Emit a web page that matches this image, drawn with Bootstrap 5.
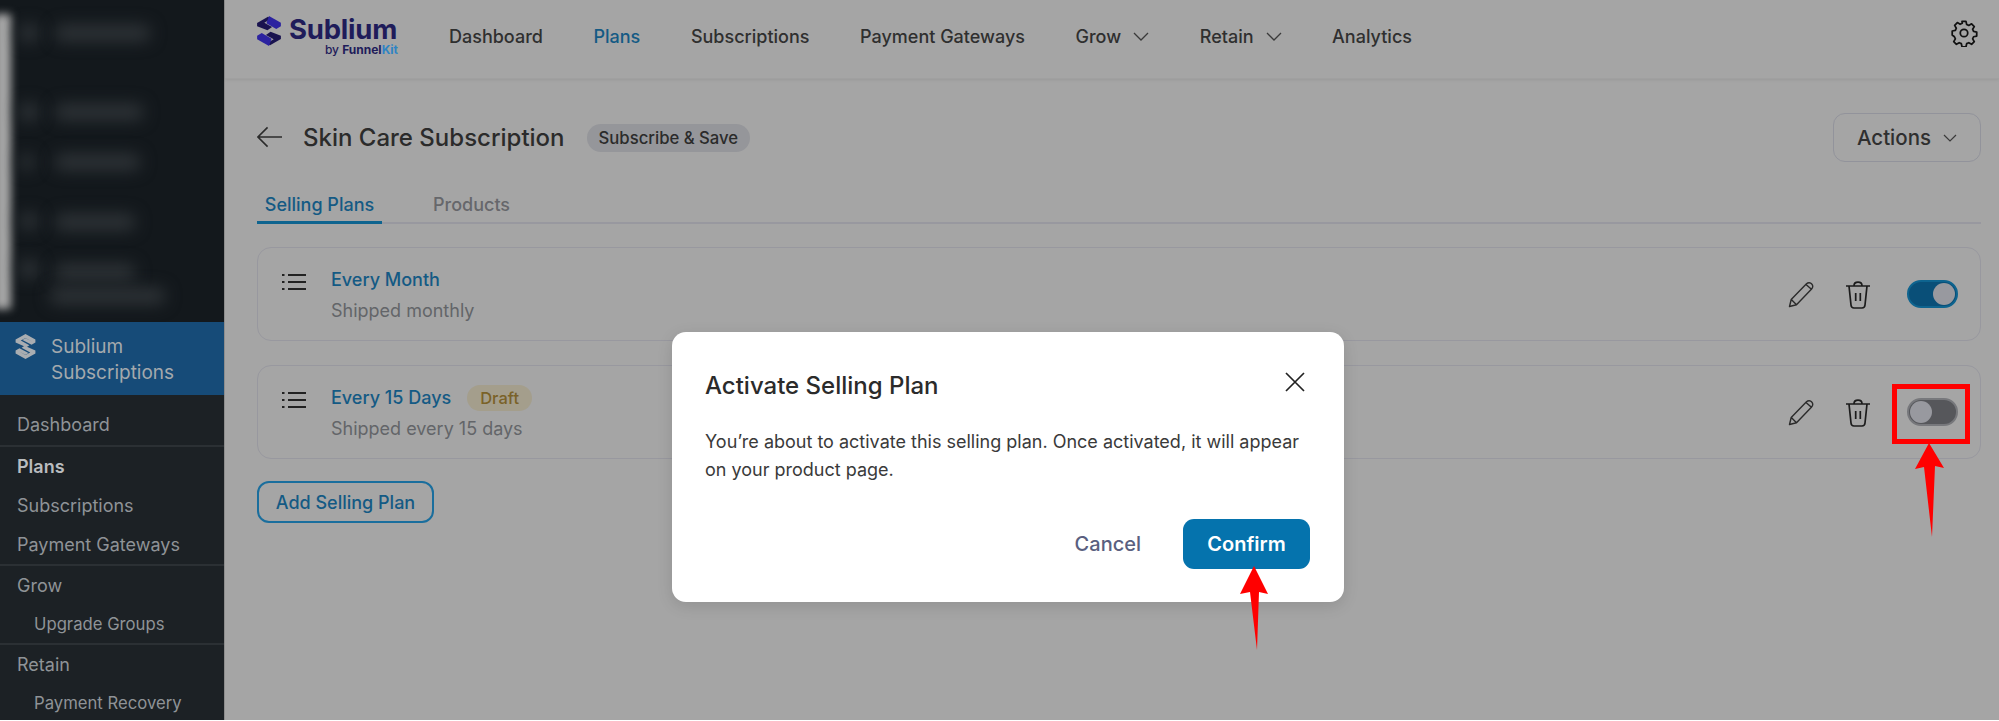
<!DOCTYPE html>
<html lang="en">
<head>
<meta charset="utf-8">
<title>Sublium Plans</title>
<link href="https://cdn.jsdelivr.net/npm/bootstrap@5.3.0/dist/css/bootstrap.min.css" rel="stylesheet">
<style>
html,body{height:720px;overflow:hidden;background:#fff}
body{font-family:Inter,"Liberation Sans",sans-serif;color:#2b2b2b}
.shell{height:720px;width:1999px}
.side{width:224px;flex:none;background:#1c2125;color:#8f9397;font-size:18px}
.side-top{height:322px;background:#13181c;position:relative;overflow:hidden}
.blur-strip{position:absolute;left:-6px;top:14px;width:17px;height:295px;background:#a8a8a8;filter:blur(4px)}
.blur-bar{position:absolute;background:#2f3438;border-radius:6px;filter:blur(8px)}
.side-head{height:73px;background:#164b78;color:#a4a9ad;font-size:19px;line-height:26px;padding:12px 0 0 15px;gap:15px}
.side-item{padding-left:17px;line-height:39px;height:39px;white-space:nowrap}
.side-first{padding-top:10px;height:50px}
.side-sub{padding-left:34px;font-size:16.7px;line-height:38px;height:38px}
.side-group{border-bottom:2px solid #2b3034}
.side-active{color:#b9bcbf;font-weight:600}
.main-area{background:#a5a5a5;min-width:0;position:relative;border-left:1px solid #8d8d8d}
.topbar{height:79px;padding:0 21px 5px 32px;box-shadow:0 1px 3px rgba(0,0,0,.08);border-bottom:1px solid #a0a0a0;font-size:18px;font-weight:500}
.brand-box{width:192px;flex:none;margin-top:-1px}
.brand-name{font-size:27.5px;font-weight:700;color:#1f1c5a;line-height:27px;letter-spacing:-.2px}
.brand-by{font-size:12px;font-weight:500;color:#1f1c5a;line-height:14px;text-align:right;width:109px}
.brand-by b{font-weight:700}
.brand-kit{color:#2f84c4}
.top-link{color:#2f2f2f;text-decoration:none;white-space:nowrap;font-size:18px;margin-right:50.6px}
.top-active{color:#145a84}
.content-pad{padding:33px 18px 0 32px}
.title-row{height:50px;margin-bottom:19px}
.page-title{font-size:24px;font-weight:500;margin:2px 22px 0 21px;color:#2b2b2b;line-height:32px}
.type-pill{background:#95969a;color:#2b2b2b;font-size:16.7px;font-weight:500;border-radius:14px;padding:0 12px;height:28px;line-height:28px;margin-top:2px}
.actions-btn{width:148px;height:49px;border:1.5px solid #92939b;border-radius:12px;font-size:20.5px;font-weight:500;color:#2f2f2f;background:transparent;padding:2px 0 0}
.tabs-row{border-bottom:2px solid #98989f;height:43px;margin-bottom:23px}
.tab-on{width:125px;text-align:center;color:#145a84;font-weight:500;font-size:18px;border-bottom:3px solid #0e648f;height:43px;line-height:28px;padding-top:10px}
.tab-off{margin-left:51px;color:#66676b;font-weight:500;font-size:18px;line-height:28px;padding-top:10px}
.plan-box{height:94px;border:1.5px solid #98989f;border-radius:14px;padding:0 22px 0 24px;margin-bottom:24px;background:transparent}
.plan-name{color:#145a84;font-weight:500;font-size:18px;line-height:24px}
.plan-sub{color:#636569;font-size:18px;line-height:24px;margin-top:7px}
.plan-text{margin-left:25px;padding-top:20px}
.list-ico{margin-top:25px;flex:none}
.draft-pill{background:#a49e8c;color:#7a6228;font-size:16.5px;font-weight:500;border-radius:14px;padding:0 13px;height:26px;line-height:26px;margin:-1px 0 -1px 16px}
.toggle-track{width:51px;height:28px;border-radius:14px;position:relative;margin-left:37px}
.toggle-on{background:#094f78;border:2px solid #0e648f}
.toggle-off{background:#56575b;border:2px solid #77787c}
.toggle-knob{position:absolute;top:1px;width:22px;height:22px;border-radius:50%;background:#98999f}
.toggle-on .toggle-knob{right:1px}
.toggle-off .toggle-knob{left:1px}
.trash-ico{margin-left:31px}
.add-btn{width:177px;height:42px;border:2px solid #1a6e9d;border-radius:12px;color:#145a84;font-size:18px;font-weight:500;background:transparent;padding:0;margin-top:-2px}
.dialog-box{position:absolute;left:672px;top:332px;width:672px;height:270px;background:#fff;border-radius:14px;box-shadow:0 4px 16px rgba(0,0,0,.12);border:0;padding:0 34px 0 33px}
.dialog-title{font-size:24px;font-weight:500;color:#2b2b2b;line-height:30px;margin:39px 0 0}
.dialog-text{font-size:18px;line-height:28px;color:#3a3a3a;margin:27px 0 0}
.dialog-close{position:absolute;left:613px;top:40px;background:none;border:0;padding:0;line-height:0}
.dialog-foot{margin-top:35px}
.cancel-link{color:#5a5f80;font-size:20px;font-weight:500;background:none;border:0;padding:0;margin-right:42px}
.confirm-btn{width:127px;height:50px;background:#0573ad;color:#fff;font-size:20px;font-weight:600;border:0;border-radius:11px;padding:0}
.marker{position:absolute;z-index:5}
.red-box{left:1892px;top:384px;width:78px;height:60px;border:5px solid #f00}
</style>
</head>
<body>
<div class="shell d-flex position-relative">
  <aside class="side">
    <div class="side-top">
      <div class="blur-strip"></div>
      <div class="blur-bar" style="left:20px;top:24px;width:18px;height:18px"></div>
      <div class="blur-bar" style="left:55px;top:25px;width:95px;height:16px"></div>
      <div class="blur-bar" style="left:20px;top:103px;width:18px;height:18px"></div>
      <div class="blur-bar" style="left:55px;top:104px;width:88px;height:16px"></div>
      <div class="blur-bar" style="left:20px;top:154px;width:14px;height:16px"></div>
      <div class="blur-bar" style="left:55px;top:154px;width:85px;height:16px"></div>
      <div class="blur-bar" style="left:20px;top:213px;width:18px;height:16px"></div>
      <div class="blur-bar" style="left:55px;top:214px;width:80px;height:16px"></div>
      <div class="blur-bar" style="left:20px;top:260px;width:18px;height:18px"></div>
      <div class="blur-bar" style="left:55px;top:264px;width:80px;height:16px"></div>
      <div class="blur-bar" style="left:50px;top:288px;width:115px;height:16px"></div>
    </div>
    <div class="side-head d-flex">
      <svg width="21" height="25" viewBox="0 0 23 29" class="flex-shrink-0" fill="#a9adb1"><path d="M11.500 0 23 6.500V10l-4.500 2.500L8 7l3.500-2 7 3.500-7-4L6 7.500l10 5.500-3.500 2.500L0 10V6.500z"/><g transform="rotate(180 11.500 14.500)"><path d="M11.500 0 23 6.500V10l-4.500 2.500L8 7l3.500-2 7 3.500-7-4L6 7.500l10 5.500-3.500 2.500L0 10V6.500z"/></g></svg>
      <div>Sublium<br>Subscriptions</div>
    </div>
    <div class="side-group"><div class="side-item side-first">Dashboard</div></div>
    <div class="side-group">
      <div class="side-item side-active">Plans</div>
      <div class="side-item">Subscriptions</div>
      <div class="side-item">Payment Gateways</div>
    </div>
    <div class="side-group">
      <div class="side-item">Grow</div>
      <div class="side-sub">Upgrade Groups</div>
    </div>
    <div>
      <div class="side-item">Retain</div>
      <div class="side-sub">Payment Recovery</div>
    </div>
  </aside>
  <main class="main-area flex-grow-1">
    <nav class="topbar d-flex align-items-center">
      <div class="brand-box d-flex">
        <svg width="24" height="30" viewBox="0 0 23 29" class="flex-shrink-0 me-2"><path fill="#19134f" d="M0 6.800 10.500.8l3 1.800L7 6.500l7.500 4.200L10 13.800 0 9.800z"/><path fill="#2c23a0" d="M11.500 0 23 6.500V10l-4.500 2.500L9 7z"/><g transform="rotate(180 11.500 14.500)"><path fill="#19134f" d="M0 6.800 10.500.8l3 1.800L7 6.500l7.500 4.200L10 13.800 0 9.800z"/><path fill="#2c23a0" d="M11.500 0 23 6.500V10l-4.500 2.500L9 7z"/></g></svg>
        <div><div class="brand-name">Sublium</div><div class="brand-by">by <b>Funnel</b><b class="brand-kit">Kit</b></div></div>
      </div>
      <a class="top-link" href="#">Dashboard</a>
      <a class="top-link top-active" href="#">Plans</a>
      <a class="top-link" href="#">Subscriptions</a>
      <a class="top-link" href="#">Payment Gateways</a>
      <a class="top-link d-inline-flex align-items-center gap-2" href="#">Grow <svg width="16" height="9" viewBox="0 0 16 9" class="ms-1"><path d="M1 1l7 7 7-7" fill="none" stroke="#3a3a3a" stroke-width="1.300"/></svg></a>
      <a class="top-link d-inline-flex align-items-center gap-2" href="#">Retain <svg width="16" height="9" viewBox="0 0 16 9" class="ms-1"><path d="M1 1l7 7 7-7" fill="none" stroke="#3a3a3a" stroke-width="1.300"/></svg></a>
      <a class="top-link" href="#">Analytics</a>
      <svg width="28" height="28" viewBox="0 0 24 24" class="ms-auto mb-2" fill="none" stroke="#111" stroke-width="1.500" stroke-linejoin="round"><circle cx="12" cy="12" r="3.200"/><path d="M10.300 2h3.400l.6 2.700 1.800.8 2.400-1.400 2.300 2.400-1.400 2.300.8 1.800 2.700.6v3.400l-2.700.6-.8 1.800 1.400 2.400-2.300 2.300-2.400-1.400-1.800.8-.6 2.700h-3.400l-.6-2.700-1.800-.8-2.400 1.400-2.300-2.300 1.400-2.400-.8-1.800L1.900 13.700v-3.400l2.700-.6.8-1.800L4 5.500l2.300-2.400 2.400 1.400 1.800-.8z"/></svg>
    </nav>
    <div class="content-pad">
      <div class="title-row d-flex align-items-center">
        <svg width="25" height="22" viewBox="0 0 26 22" fill="none" stroke="#2b2b2b" stroke-width="1.600"><path d="M26 11H1M11 1 1 11l10 10"/></svg>
        <h1 class="page-title">Skin Care Subscription</h1>
        <span class="type-pill">Subscribe &amp; Save</span>
        <button class="actions-btn ms-auto d-flex align-items-center justify-content-center gap-2" type="button">Actions <svg width="14" height="8" viewBox="0 0 14 8" class="ms-1"><path d="M1 1l6 6 6-6" fill="none" stroke="#3a3a3a" stroke-width="1.200"/></svg></button>
      </div>
      <div class="tabs-row d-flex">
        <div class="tab-on">Selling Plans</div>
        <div class="tab-off">Products</div>
      </div>
      <div class="plan-box d-flex">
        <svg width="24" height="18" viewBox="0 0 24 18" class="list-ico" fill="none" stroke="#222" stroke-width="2"><path d="M6 2h18M6 9h18M6 16h18M0 2h2.500M0 9h2.500M0 16h2.500"/></svg>
        <div class="plan-text flex-grow-1">
          <div class="plan-name">Every Month</div>
          <div class="plan-sub">Shipped monthly</div>
        </div>
        <div class="d-flex align-items-center">
          <svg width="27" height="27" viewBox="0 0 27 27" fill="none" stroke="#2b2b2b" stroke-width="1.400" stroke-linejoin="round"><path d="M1.500 25.500l1.700-7L18.500 2.800c1.500-1.400 4-1.300 5.300.2 1.400 1.500 1.200 3.700-.2 5L8.500 23.800zM3.300 18.500l5.200 5.300M18 3.500l5.700 5"/></svg>
          <svg width="24" height="29" viewBox="0 0 24 29" class="trash-ico" fill="none" stroke="#1c1c1c" stroke-width="1.700"><path d="M0 6h24M8 5.500C8 1 16 1 16 5.500M3 6l2 19c.2 2 1.500 3 3 3h8c1.500 0 2.800-1 3-3l2-19M9.700 13v8M14.300 13v8"/></svg>
          <div class="toggle-track toggle-on"><div class="toggle-knob"></div></div>
        </div>
      </div>
      <div class="plan-box d-flex">
        <svg width="24" height="18" viewBox="0 0 24 18" class="list-ico" fill="none" stroke="#222" stroke-width="2"><path d="M6 2h18M6 9h18M6 16h18M0 2h2.500M0 9h2.500M0 16h2.500"/></svg>
        <div class="plan-text flex-grow-1">
          <div class="d-flex align-items-center"><div class="plan-name">Every 15 Days</div><span class="draft-pill">Draft</span></div>
          <div class="plan-sub">Shipped every 15 days</div>
        </div>
        <div class="d-flex align-items-center">
          <svg width="27" height="27" viewBox="0 0 27 27" fill="none" stroke="#2b2b2b" stroke-width="1.400" stroke-linejoin="round"><path d="M1.500 25.500l1.700-7L18.500 2.800c1.500-1.400 4-1.300 5.300.2 1.400 1.500 1.200 3.700-.2 5L8.500 23.800zM3.300 18.500l5.200 5.300M18 3.500l5.700 5"/></svg>
          <svg width="24" height="29" viewBox="0 0 24 29" class="trash-ico" fill="none" stroke="#1c1c1c" stroke-width="1.700"><path d="M0 6h24M8 5.500C8 1 16 1 16 5.500M3 6l2 19c.2 2 1.500 3 3 3h8c1.500 0 2.800-1 3-3l2-19M9.700 13v8M14.300 13v8"/></svg>
          <div class="toggle-track toggle-off"><div class="toggle-knob"></div></div>
        </div>
      </div>
      <button class="add-btn" type="button">Add Selling Plan</button>
    </div>
  </main>
  <div class="dialog-box">
    <h2 class="dialog-title">Activate Selling Plan</h2>
    <button class="dialog-close" type="button" aria-label="Close"><svg width="20" height="20" viewBox="0 0 20 20" fill="none" stroke="#222" stroke-width="1.700"><path d="M1 1l18 18M19 1 1 19"/></svg></button>
    <p class="dialog-text">You’re about to activate this selling plan. Once activated, it will appear on your product page.</p>
    <div class="dialog-foot d-flex justify-content-end align-items-center">
      <button class="cancel-link" type="button">Cancel</button>
      <button class="confirm-btn" type="button">Confirm</button>
    </div>
  </div>
  <div class="marker red-box"></div>
  <svg class="marker" style="left:1910px;top:441px" width="38" height="100" viewBox="0 0 38 100"><path fill="#f00" d="M19 2 34 27 25 25 22 96 14 26 5 28z"/></svg>
  <svg class="marker" style="left:1236px;top:562px" width="38" height="92" viewBox="0 0 38 92"><path fill="#f00" d="M18 4 32 32 23 30 21 88 14 30 4 32z"/></svg>
</div>
</body>
</html>
